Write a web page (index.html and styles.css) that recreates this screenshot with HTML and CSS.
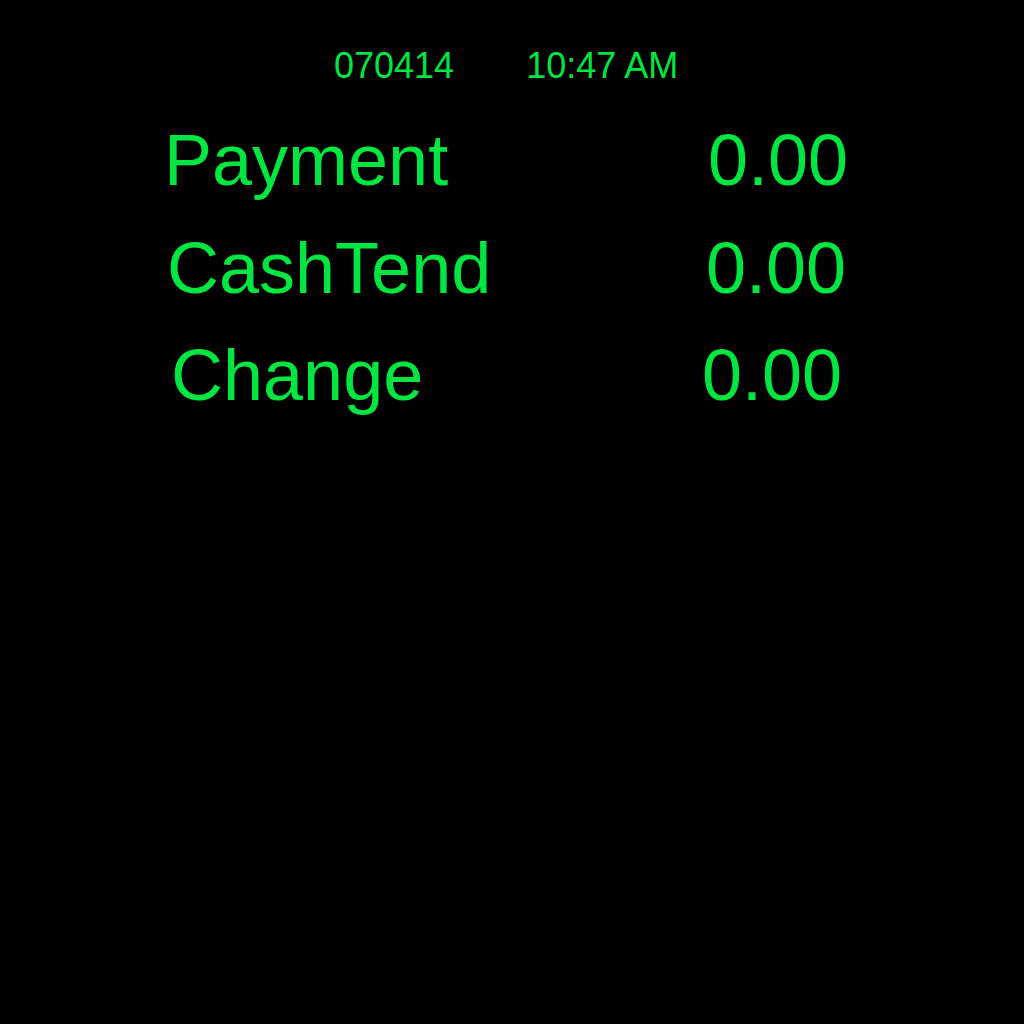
FILE: index.html
```html
<!DOCTYPE html>
<html lang="en">
<head>
<meta charset="utf-8">
<title>Payment</title>
<link rel="stylesheet" href="styles.css">
</head>
<body>
<main class="screen">
  <header class="header">
    <span class="date">070414</span>
    <span class="time">10:47 AM</span>
  </header>
  <section class="totals">
    <div class="row row-payment">
      <span class="label">Payment</span>
      <span class="value">0.00</span>
    </div>
    <div class="row row-tend">
      <span class="label">CashTend</span>
      <span class="value">0.00</span>
    </div>
    <div class="row row-change">
      <span class="label">Change</span>
      <span class="value">0.00</span>
    </div>
  </section>
</main>
</body>
</html>
```
FILE: styles.css
```css
html, body {
  margin: 0;
  padding: 0;
  background: #000;
}
body {
  width: 1024px;
  height: 1024px;
  font-family: "Liberation Sans", Arial, sans-serif;
  color: #00e640;
}
.screen {
  display: flex;
  flex-direction: column;
}
.header {
  display: flex;
  gap: 72px;
  padding: 46px 0 0 334px;
  font-size: 36px;
  line-height: 40px;
}
.totals {
  display: flex;
  flex-direction: column;
  margin-top: 20px;
}
.row {
  display: grid;
  grid-template-columns: var(--label-w) auto;
  padding-left: var(--pad);
  font-size: 72px;
  line-height: 108px;
}
.row-payment { --pad: 164px; --label-w: 544px; }
.row-tend { --pad: 167px; --label-w: 539px; }
.row-change { --pad: 171px; --label-w: 531px; margin-top: -1px; }
```
